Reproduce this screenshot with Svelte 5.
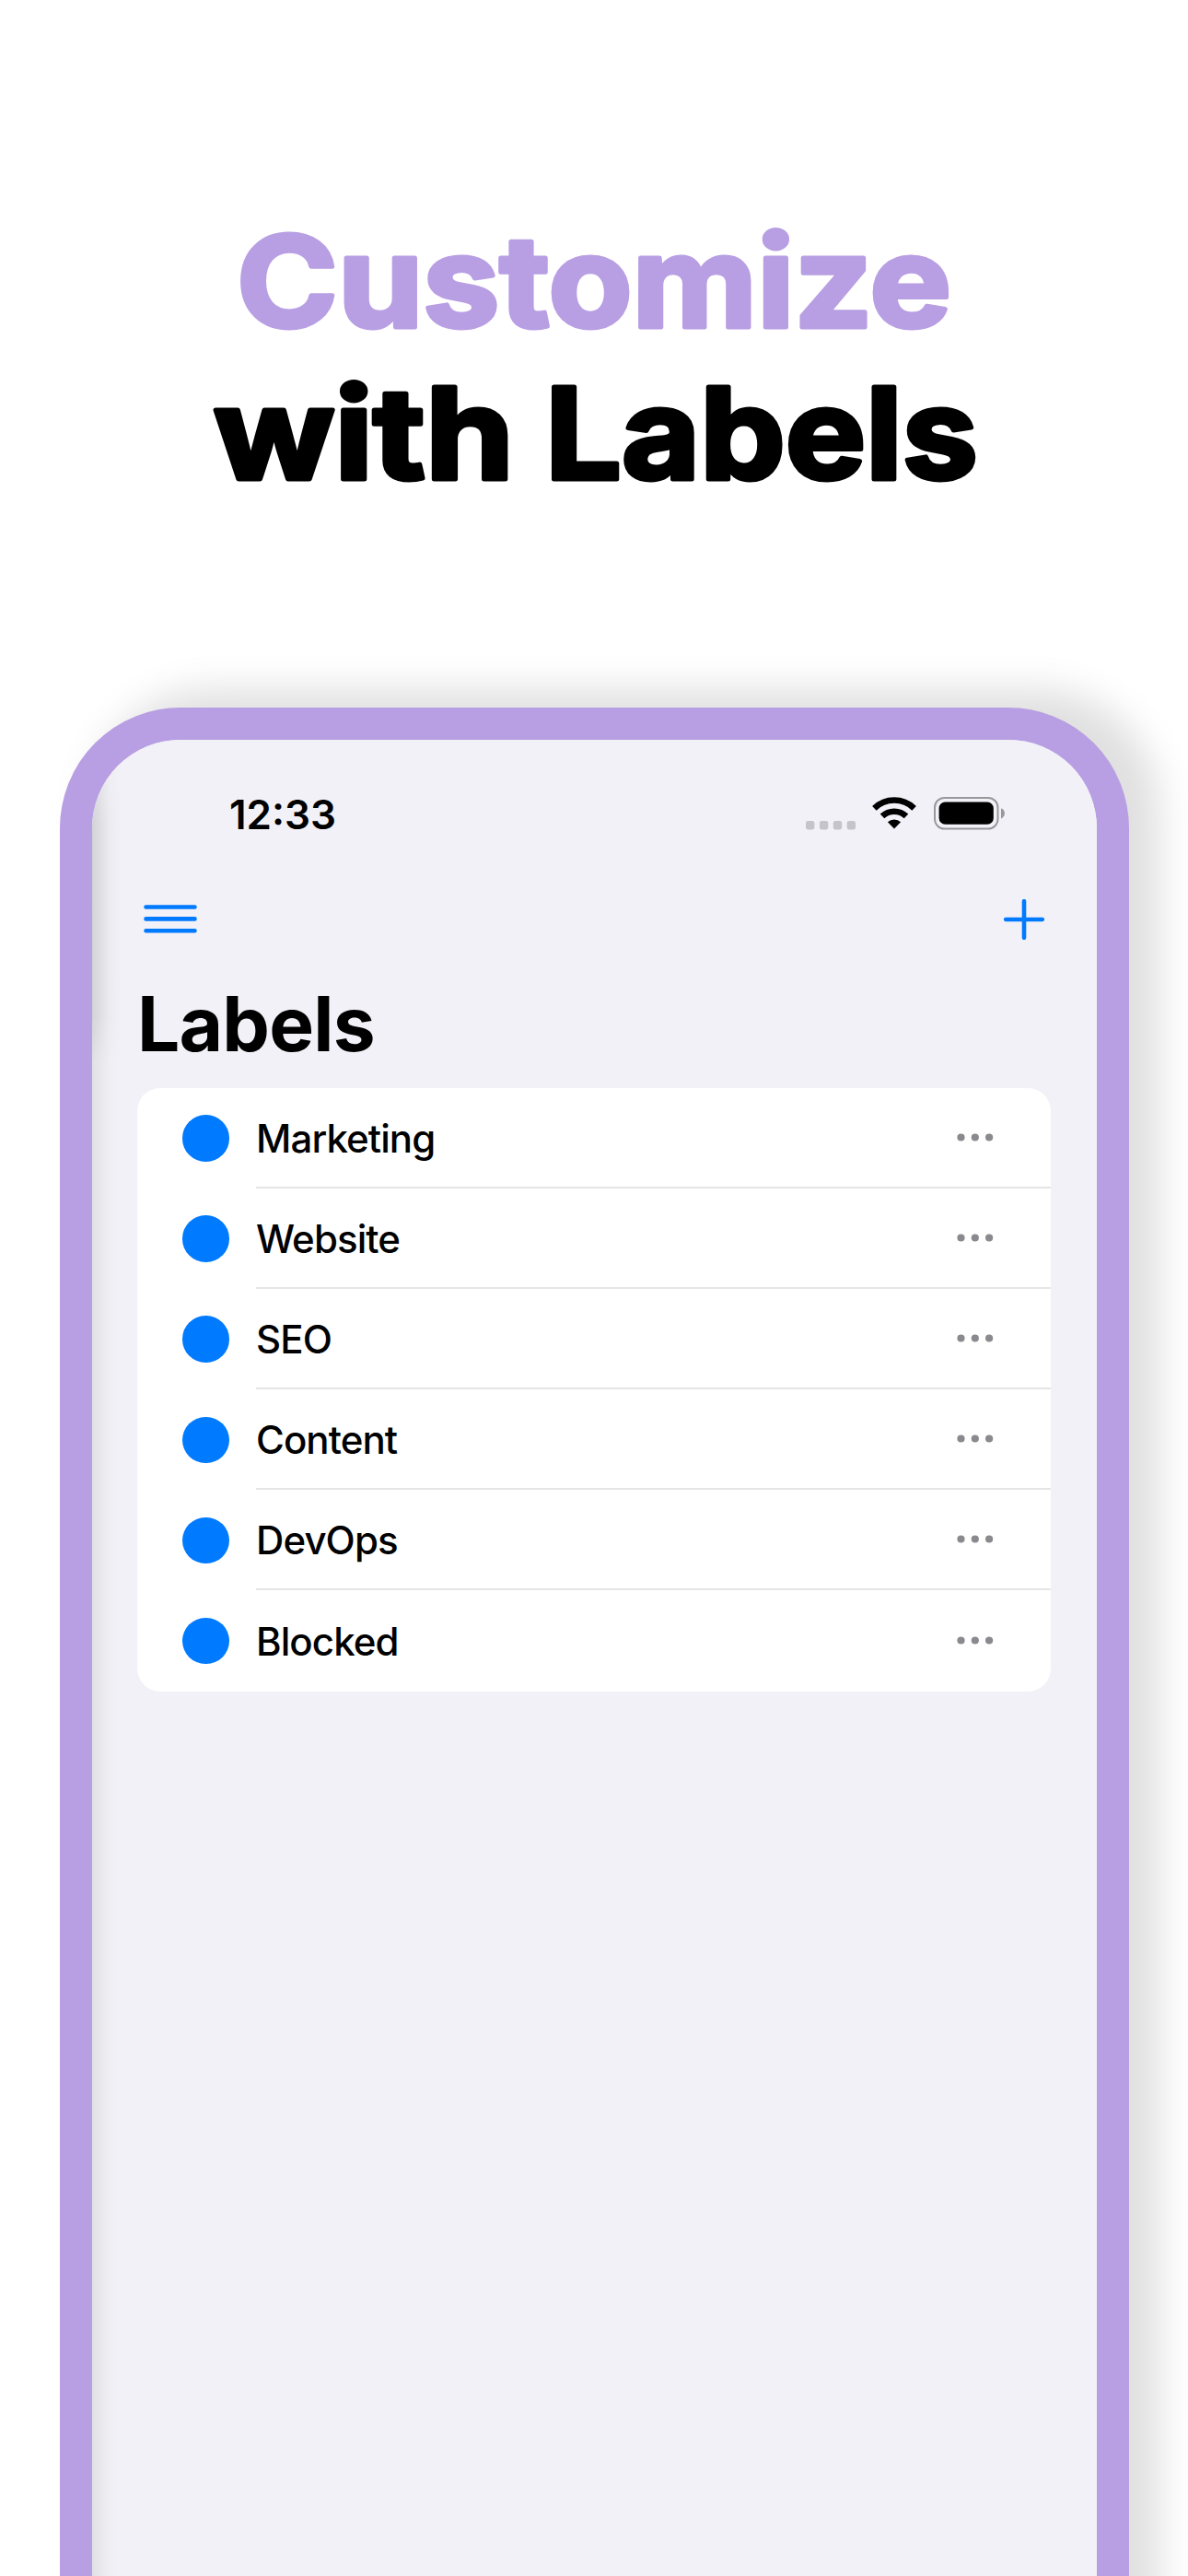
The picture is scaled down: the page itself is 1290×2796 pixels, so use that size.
<script>
  const labels = ['Marketing', 'Website', 'SEO', 'Content', 'DevOps', 'Blocked'];
</script>

<main>
  <h1>
    <svg class="headline" viewBox="0 0 1290 360" aria-label="Customize with Labels">
      <text class="accent" x="257" y="153" textLength="776" lengthAdjust="spacingAndGlyphs">Customize</text>
      <text x="232" y="318" textLength="326" lengthAdjust="spacingAndGlyphs">with</text>
      <text x="592" y="318" textLength="470" lengthAdjust="spacingAndGlyphs">Labels</text>
    </svg>
  </h1>

  <div class="phone">
    <div class="screen">
      <header class="status">
        <span class="time">12:33</span>
        <div class="indicators">
          <svg class="cell" width="54" height="10" viewBox="0 0 54 10">
            <rect x="0" width="9.4" height="9.4" rx="2.6" />
            <rect x="14.9" width="9.4" height="9.4" rx="2.6" />
            <rect x="29.8" width="9.4" height="9.4" rx="2.6" />
            <rect x="44.7" width="9.4" height="9.4" rx="2.6" />
          </svg>
          <svg class="wifi" width="48" height="35" viewBox="0 0 48 35">
            <path d="M2.4 12.3A31 31 0 0 1 45.6 12.3" />
            <path d="M11 20.9A18.8 18.8 0 0 1 37 20.9" />
            <path class="fill" d="M16.9 27.3A10.2 10.2 0 0 1 31.1 27.3L24 34.6Z" />
          </svg>
          <svg class="battery" width="77" height="36" viewBox="0 0 77 36">
            <rect class="shell" x="1" y="1" width="68.5" height="33.6" rx="10.5" />
            <rect x="5.6" y="5.6" width="59.2" height="24.2" rx="6.8" />
            <path class="cap" d="M73 12.2C78.2 14 78.2 21.6 73 23.4Z" />
          </svg>
        </div>
      </header>

      <nav>
        <svg class="menu" width="58" height="31" viewBox="0 0 58 31">
          <path d="M2.5 2.5H55.5M2.5 15.4H55.5M2.5 28.3H55.5" />
        </svg>
        <svg class="plus" width="44" height="44" viewBox="0 0 44 44">
          <path d="M22 2.2V41.8M2.2 22H41.8" />
        </svg>
      </nav>

      <h2>Labels</h2>

      <ul>
        {#each labels as label}
          <li>
            <span class="dot"></span>
            <div class="body">
              <span class="name">{label}</span>
              <svg class="more" width="40" height="9" viewBox="0 0 40 9">
                <circle cx="4.5" cy="4.5" r="4.1" />
                <circle cx="19.8" cy="4.5" r="4.1" />
                <circle cx="35.1" cy="4.5" r="4.1" />
              </svg>
            </div>
          </li>
        {/each}
      </ul>
    </div>
  </div>
</main>

<style>
  :global(body) {
    margin: 0;
    background: #fff;
  }
  main {
    width: 1290px;
    height: 2796px;
    overflow: hidden;
    background: #fff;
    font-family: Inter, sans-serif;
    color: #000;
    display: flex;
    flex-direction: column;
    align-items: center;
  }
  h1 {
    margin: 0;
    padding-top: 202px;
    height: 565.5px;
    flex: none;
  }
  .headline {
    display: block;
    width: 1290px;
    height: 360px;
    font-family: Inter, sans-serif;
    font-size: 137px;
    font-weight: 700;
    stroke: #000;
    stroke-width: 5px;
    stroke-linejoin: round;
  }
  .accent {
    fill: #b89fe3;
    stroke: #b89fe3;
  }
  .phone {
    box-sizing: border-box;
    flex: none;
    width: 1161px;
    height: 2300px;
    border: 35px solid #b89fe3;
    border-radius: 131px;
    background: #f2f1f7;
    box-shadow: 33px -20px 40px rgba(0, 0, 0, 0.125);
    overflow: hidden;
  }
  .screen {
    position: relative;
    height: 100%;
    box-sizing: border-box;
    padding: 0 49.5px;
    background: linear-gradient(90deg, #e0e0e5 0, #e8e8ed 10px, #efeff4 20px, #f2f1f7 34px);
  }
  /* Deeper shade along the left edge, fading in under the corner and out beside the title */
  .screen::before {
    content: '';
    position: absolute;
    left: 0;
    top: 0;
    width: 32px;
    height: 350px;
    background: linear-gradient(90deg, rgba(0, 0, 0, 0.06), rgba(0, 0, 0, 0.04) 8px, rgba(0, 0, 0, 0.015) 17px, transparent);
    mask-image: linear-gradient(transparent 20px, #000 90px, #000 300px, transparent);
  }
  .status {
    display: flex;
    justify-content: space-between;
    padding: 61px 50.5px 0 100px;
    height: 60px;
  }
  .time {
    font-size: 44px;
    line-height: 40px;
    font-weight: 600;
  }
  .indicators {
    display: flex;
    height: 36px;
    padding-top: 1px;
  }
  .cell {
    align-self: flex-end;
    fill: #c5c4c9;
    margin-right: 18px;
  }
  .wifi {
    margin-right: 19px;
    fill: none;
    stroke: #000;
    stroke-width: 6.6;
  }
  .wifi .fill {
    fill: #000;
    stroke: none;
  }
  .shell {
    fill: none;
    stroke: #98989b;
    stroke-width: 2;
  }
  .cap {
    fill: #98989b;
  }
  nav {
    display: flex;
    justify-content: space-between;
    align-items: center;
    height: 44px;
    padding: 52px 7.5px 0 6.5px;
  }
  nav svg {
    fill: none;
    stroke: #007aff;
    stroke-linecap: round;
    stroke-width: 4.6;
  }
  h2 {
    margin: 50px 0 0;
    font-size: 82px;
    line-height: 84px;
    font-weight: 700;
    letter-spacing: -0.8px;
  }
  ul {
    list-style: none;
    margin: 27.5px 0 0;
    padding: 0;
    background: #fff;
    border-radius: 25px;
    overflow: hidden;
  }
  li {
    display: flex;
    height: 109.1px;
    align-items: center;
    padding-left: 49px;
  }
  .dot {
    width: 50.5px;
    height: 50.5px;
    border-radius: 50%;
    background: #007aff;
    margin-right: 29px;
  }
  .body {
    box-sizing: border-box;
    flex: 1;
    height: 100%;
    display: flex;
    align-items: center;
    justify-content: space-between;
    padding-right: 62px;
    border-bottom: 2px solid #e5e5e6;
  }
  li:last-child .body {
    border-bottom-color: transparent;
  }
  .name {
    font-size: 42px;
    line-height: 50px;
    font-weight: 450;
    letter-spacing: -0.9px;
    padding: 3px 0 0 0.5px;
  }
  .more {
    fill: #8a8a8e;
  }
</style>
